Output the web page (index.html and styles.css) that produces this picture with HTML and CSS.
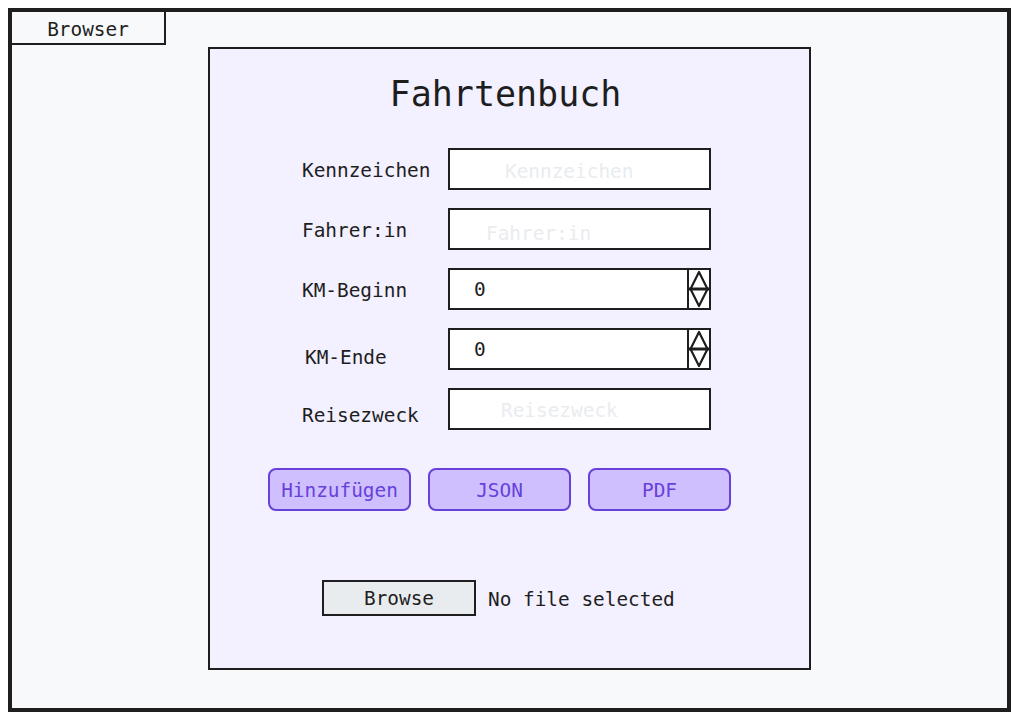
FILE: index.html
```html
<!DOCTYPE html>
<html lang="de">
<head>
<meta charset="utf-8">
<title>Fahrtenbuch</title>
<link rel="stylesheet" href="styles.css">
</head>
<body>
<div class="frame">
  <div class="tab">Browser</div>
  <div class="card">
    <h1 class="title">Fahrtenbuch</h1>
    <div class="form">
      <div class="label">Kennzeichen</div>
      <div class="field"><span class="ph ph-kz">Kennzeichen</span></div>

      <div class="label">Fahrer:in</div>
      <div class="field"><span class="ph ph-fa">Fahrer:in</span></div>

      <div class="label">KM-Beginn</div>
      <div class="field num"><span class="val">0</span>
        <div class="spin">
          <svg width="20" height="38" viewBox="0 0 20 38"><path d="M0 19 H20" stroke="#1e1e1e" stroke-width="3"/><path d="M1.5 19 L10 2 L18.5 19 M1.5 19 L10 36 L18.5 19" fill="none" stroke="#1e1e1e" stroke-width="2.2" stroke-linejoin="round"/></svg>
        </div>
      </div>

      <div class="label low">KM-Ende</div>
      <div class="field num"><span class="val">0</span>
        <div class="spin">
          <svg width="20" height="38" viewBox="0 0 20 38"><path d="M0 19 H20" stroke="#1e1e1e" stroke-width="3"/><path d="M1.5 19 L10 2 L18.5 19 M1.5 19 L10 36 L18.5 19" fill="none" stroke="#1e1e1e" stroke-width="2.2" stroke-linejoin="round"/></svg>
        </div>
      </div>

      <div class="label low2">Reisezweck</div>
      <div class="field"><span class="ph ph-rz">Reisezweck</span></div>
    </div>

    <div class="actions">
      <div class="btn">Hinzufügen</div>
      <div class="btn">JSON</div>
      <div class="btn">PDF</div>
    </div>

    <div class="file">
      <div class="browse">Browse</div>
      <span class="nofile">No file selected</span>
    </div>
  </div>
</div>
</body>
</html>
```
FILE: styles.css
```css
* { box-sizing: border-box; }
html, body { margin: 0; padding: 0; background: #ffffff; }
body {
  font-family: "DejaVu Sans Mono", "Liberation Mono", monospace;
  color: #1e1e1e;
  font-size: 19.4px;
}
.frame {
  margin: 8px 0 0 8px;
  width: 1003px;
  height: 704px;
  border: 4px solid #1e1e1e;
  background: #f8f9fa;
}
.tab {
  width: 154px;
  height: 33px;
  border-right: 2px solid #1e1e1e;
  border-bottom: 2px solid #1e1e1e;
  display: flex;
  align-items: center;
  justify-content: center;
  padding-top: 3px;
}
.card {
  margin: 2px 0 0 196px;
  width: 603px;
  height: 623px;
  border: 2px solid #1e1e1e;
  background: #f3f0ff;
}
.title {
  margin: 0;
  padding: 25px 8px 0 0;
  font-size: 35px;
  line-height: 40px;
  font-weight: normal;
  text-align: center;
}
.form {
  margin-top: 34px;
  display: grid;
  grid-template-columns: 238px 263px;
  grid-auto-rows: 42px;
  row-gap: 18px;
}
.label {
  padding-left: 92px;
  display: flex;
  align-items: center;
  padding-top: 2px;
}
.label.low { padding-top: 16px; padding-left: 95px; }
.label.low2 { padding-top: 12px; }
.field {
  border: 2px solid #1e1e1e;
  background: #ffffff;
  display: flex;
  align-items: center;
  position: relative;
}
.ph { color: #e9ecef; }
.ph-kz { padding-left: 55px; padding-top: 4px; }
.ph-fa { padding-left: 36px; padding-top: 8px; }
.ph-rz { padding-left: 51px; padding-top: 2px; }
.val { padding-left: 24px; }
.num { justify-content: space-between; }
.spin {
  width: 22px;
  height: 38px;
  border-left: 2px solid #1e1e1e;
  display: flex;
}
.spin svg { display: block; }
.actions {
  margin: 38px 0 0 58px;
  display: flex;
  gap: 17px;
}
.btn {
  width: 143px;
  height: 43px;
  border: 2px solid #6741d9;
  border-radius: 8px;
  background: #d0bfff;
  color: #6741d9;
  display: flex;
  align-items: center;
  justify-content: center;
  padding-top: 1px;
}
.file {
  margin: 69px 0 0 112px;
  display: flex;
  align-items: center;
  gap: 12px;
}
.browse {
  width: 154px;
  height: 36px;
  border: 2px solid #1e1e1e;
  background: #e9ecef;
  display: flex;
  align-items: center;
  justify-content: center;
}
.nofile { padding-top: 2px; }
```
